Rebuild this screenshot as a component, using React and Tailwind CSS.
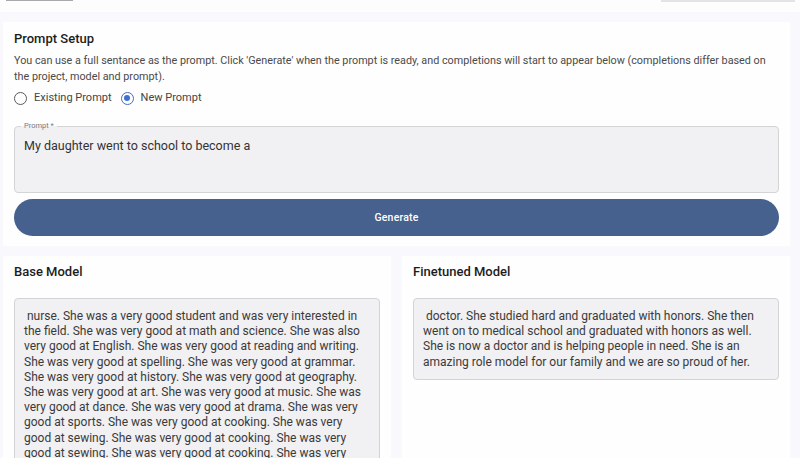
const baseText =
    " nurse. She was a very good student and was very interested in the field. She was very good at math and science. She was also very good at English. She was very good at reading and writing. She was very good at spelling. She was very good at grammar. She was very good at history. She was very good at geography. She was very good at art. She was very good at music. She was very good at dance. She was very good at drama. She was very good at sports. She was very good at cooking. She was very good at sewing. She was very good at cooking. She was very good at sewing. She was very good at cooking. She was very good at sewing. She was very good at cooking. She was very good at sewing."

const finetunedText =
    " doctor. She studied hard and graduated with honors. She then went on to medical school and graduated with honors as well. She is now a doctor and is helping people in need. She is an amazing role model for our family and we are so proud of her."

const Radio = ({ checked, label }) => (
    <label className="flex items-center gap-[7px] cursor-pointer">
        <span
            className={
                checked
                    ? 'w-[13px] h-[13px] rounded-full border-[1.5px] border-[#3f6fd1] flex items-center justify-center'
                    : 'w-[13px] h-[13px] rounded-full border-[1.5px] border-[#5a5a5a]'
            }
        >
            {checked && <span className="w-[6px] h-[6px] rounded-full bg-[#3f6fd1]" />}
        </span>
        <span className="text-[11px] text-[#444]">{label}</span>
    </label>
)

const OutputCard = ({ title, text }) => (
    <div className="bg-[#fefefe] px-[11px] pt-[7px] h-[220px]">
        <h3 className="text-[13px] leading-[18px] font-medium text-[#1c1c1c]">{title}</h3>
        <div className="mt-[17px] rounded-[4px] border border-[#d3d3d6] bg-[#f1f0f3] pl-[9px] pr-[10px] pt-[10px] pb-[9px]">
            <p className="text-[12px] leading-[15.2px] text-[#3a3a3a] whitespace-pre-wrap">{text}</p>
        </div>
    </div>
)

export default function App() {
    return (
        <div className="w-full h-[458px] overflow-hidden bg-[#f9f8fd] font-['Roboto',sans-serif]">
            {/* bottom edge of the section above, scrolled off */}
            <div className="h-[12px] bg-[#fdfdfd] flex justify-between items-start">
                <div className="ml-[6px] w-[67px] h-[1px] bg-[#a8a8a8]" />
                <div className="mr-[5px] w-[134px] h-[2px] bg-[#e3e3e3]" />
            </div>

            <div className="pt-[10px] pl-[3px] pr-[10px]">
                <div className="bg-[#fefefe] px-[11px] pt-[8px] pb-[10px]">
                    <h2 className="text-[13px] leading-[18px] font-medium text-[#1c1c1c]">Prompt Setup</h2>
                    <p className="mt-[5px] text-[10.8px] leading-[16px] text-[#4a4a4a]">
                        You can use a full sentance as the prompt. Click 'Generate' when the prompt is ready, and completions will start to appear below (completions differ based on the project, model and prompt).
                    </p>
                    <div className="mt-[3px] h-[20px] flex items-center gap-[9px]">
                        <Radio label="Existing Prompt" />
                        <Radio checked label="New Prompt" />
                    </div>

                    <div className="relative mt-[18px] h-[67px] rounded-[4px] border border-[#d4d4d7] bg-[#f1f0f3] px-[9px] pt-[10px]">
                        <span className="absolute left-[6px] -top-[6px] px-[3px] text-[7.5px] leading-[10px] text-[#7a7a7a] bg-[linear-gradient(to_bottom,#fefefe_50%,#f1f0f3_50%)]">
                            Prompt *
                        </span>
                        <p className="text-[12.5px] leading-[18px] text-[#333]">My daughter went to school to become a</p>
                    </div>

                    <button className="mt-[6px] w-full h-[37px] rounded-full bg-[#47618e] text-white text-[10.5px] font-medium tracking-[0.2px]">
                        Generate
                    </button>
                </div>

                <div className="mt-[10px] grid grid-cols-2 gap-[11px]">
                    <OutputCard title="Base Model" text={baseText} />
                    <OutputCard title="Finetuned Model" text={finetunedText} />
                </div>
            </div>
        </div>
    )
}
